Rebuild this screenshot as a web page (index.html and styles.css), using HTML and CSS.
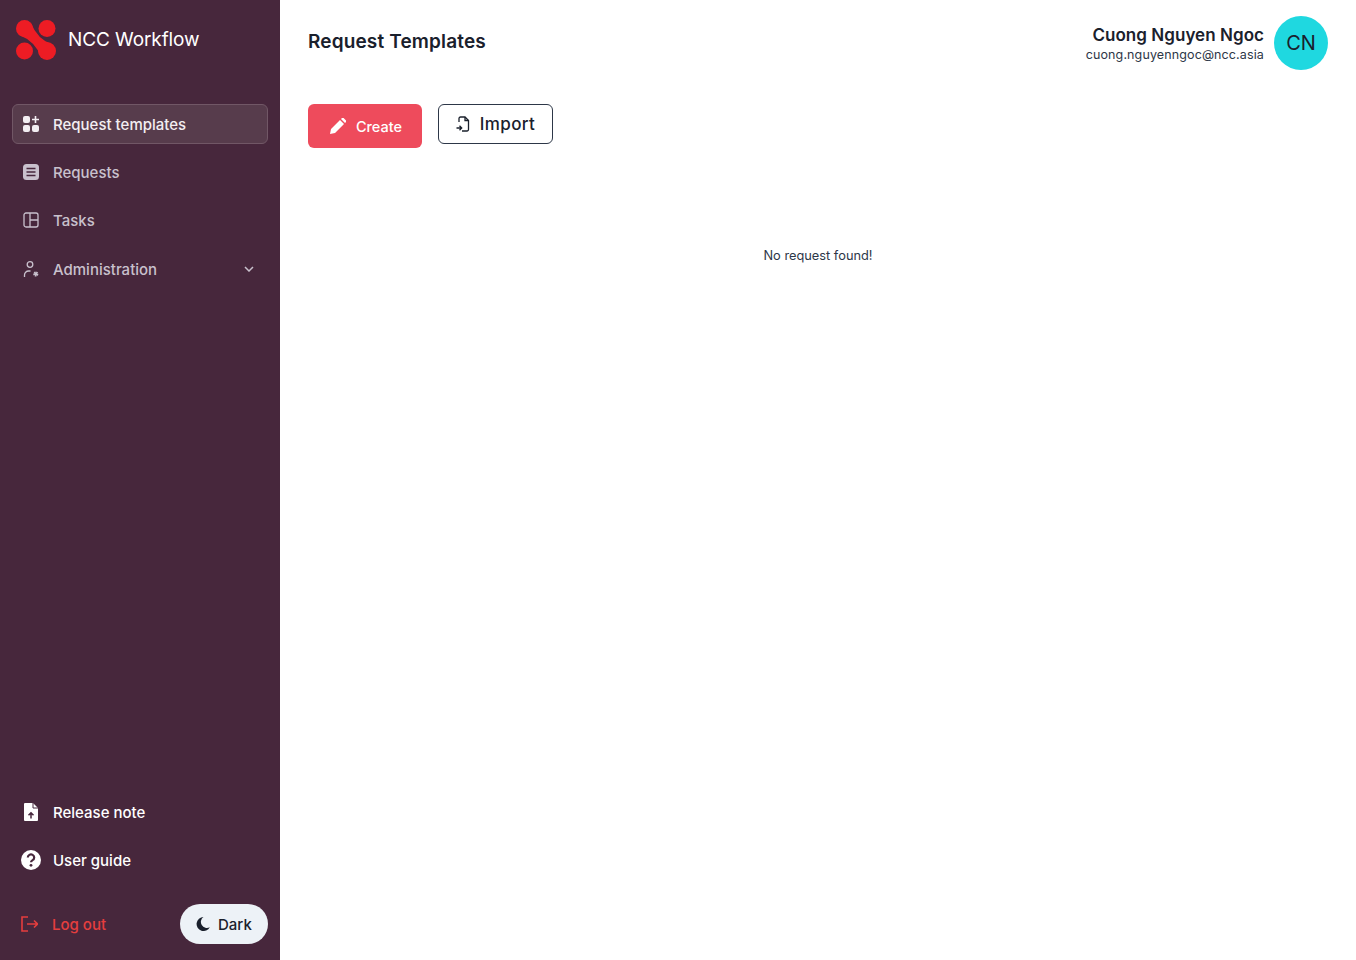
FILE: index.html
```html
<!DOCTYPE html>
<html lang="en">
<head>
    <meta charset="UTF-8">
    <meta name="viewport" content="width=device-width, initial-scale=1.0">
    <title>NCC Workflow</title>
    <link rel="stylesheet" href="styles.css">
</head>
<body>
    <div class="app">
        <aside class="sidebar">
            <div class="brand">
                <svg class="brand-logo" viewBox="0 0 40 40" fill="#ed1c24">
                    <circle cx="8.500" cy="8.500" r="8.500"/>
                    <circle cx="31" cy="31" r="9"/>
                    <circle cx="8.500" cy="31" r="8.500"/>
                    <circle cx="31" cy="8.500" r="8.500"/>
                    <path d="M15 3Q21 19 37 25L25 37Q19 21 3 15z"/>
                </svg>
                <span class="brand-name">NCC Workflow</span>
            </div>

            <nav class="nav">
                <a class="nav-item active">
                    <svg class="nav-icon" viewBox="0 0 16 16" fill="currentColor">
                        <rect x="0" y="0" width="7" height="7" rx="2"/>
                        <rect x="0" y="9" width="7" height="7" rx="2"/>
                        <rect x="9" y="9" width="7" height="7" rx="2"/>
                        <path d="M11.700 0h1.600v2.700H16v1.600h-2.700V7h-1.600V4.300H9V2.700h2.700z"/>
                    </svg>
                    <span>Request templates</span>
                </a>
                <a class="nav-item">
                    <svg class="nav-icon" viewBox="0 0 16 16">
                        <rect x="0" y="0" width="16" height="16" rx="3.500" fill="currentColor"/>
                        <path d="M3.500 4.500h9M3.500 8h9M3.500 11.500h9" stroke="#47273c" stroke-width="1.600"/>
                    </svg>
                    <span>Requests</span>
                </a>
                <a class="nav-item">
                    <svg class="nav-icon" viewBox="0 0 16 16" fill="none" stroke="currentColor" stroke-width="1.300">
                        <rect x="1" y="1" width="14" height="14" rx="2"/>
                        <path d="M7 1v14M7 8h8"/>
                    </svg>
                    <span>Tasks</span>
                </a>
                <a class="nav-item nav-item-tall">
                    <svg class="nav-icon" viewBox="0 0 16 16" fill="none" stroke="currentColor" stroke-width="1.300">
                        <circle cx="7" cy="3.500" r="2.800"/>
                        <path d="M1.500 16v-2a4 4 0 0 1 4-4h2"/>
                        <circle cx="12.800" cy="13" r="1.700" fill="currentColor" stroke-dasharray="1.300 .6" stroke-width="1.800"/>
                    </svg>
                    <span>Administration</span>
                    <svg class="nav-chevron" viewBox="0 0 10 6" fill="none" stroke="currentColor" stroke-width="1.500">
                        <path d="M1 1l4 4 4-4"/>
                    </svg>
                </a>
            </nav>

            <div class="nav nav-bottom">
                <a class="nav-item light">
                    <svg class="nav-icon nav-icon-file" viewBox="0 0 14 18">
                        <path d="M1 0H9l5 5v12a1 1 0 0 1-1 1H1a1 1 0 0 1-1-1V1a1 1 0 0 1 1-1z" fill="#fff"/>
                        <path d="M9 0v5h5" fill="none" stroke="#47273c" stroke-width="1"/>
                        <path d="M7 15.500V10M4.500 12.300 7 9.800l2.500 2.500" fill="none" stroke="#47273c" stroke-width="1.500"/>
                    </svg>
                    <span>Release note</span>
                </a>
                <a class="nav-item light">
                    <svg class="nav-icon nav-icon-big" viewBox="0 0 20 20">
                        <circle cx="10" cy="10" r="10" fill="#fff"/>
                        <path d="M6.800 7.500a3.200 3 0 1 1 4.800 2.600c-1 .6-1.600 1-1.600 2.200" fill="none" stroke="#47273c" stroke-width="2.200"/>
                        <circle cx="10" cy="15.300" r="1.400" fill="#47273c"/>
                    </svg>
                    <span>User guide</span>
                </a>
            </div>

            <div class="sidebar-foot">
                <a class="logout">
                    <svg class="logout-icon" viewBox="0 0 17 16" fill="none" stroke="currentColor" stroke-width="1.600">
                        <path d="M7 1H1v14h6M6 8h10.500M13 4.500 16.500 8 13 11.500"/>
                    </svg>
                    <span>Log out</span>
                </a>
                <button class="theme-toggle">
                    <svg class="theme-icon" viewBox="0 0 14 14" fill="currentColor">
                        <path d="M7.500 0a7 7 0 1 0 6.300 10.200A6 6 0 0 1 7.500 0z"/>
                    </svg>
                    <span>Dark</span>
                </button>
            </div>
        </aside>

        <main class="main">
            <header class="topbar">
                <h1 class="page-title">Request Templates</h1>
                <div class="user">
                    <div class="user-info">
                        <div class="user-name">Cuong Nguyen Ngoc</div>
                        <div class="user-mail">cuong.nguyenngoc@ncc.asia</div>
                    </div>
                    <div class="avatar">CN</div>
                </div>
            </header>

            <div class="actions">
                <button class="btn btn-create">
                    <svg class="btn-icon" viewBox="0 0 16 16" fill="currentColor">
                        <path d="M0 16l1-5L10 2l4 4-9 9zM11 1l1-1c.6-.4 1.200-.4 1.600 0l2.400 2.400c.4.400.4 1 0 1.600l-1 1z"/>
                    </svg>
                    <span>Create</span>
                </button>
                <button class="btn btn-import">
                    <svg class="btn-icon-small" viewBox="0 0 14 16" fill="none" stroke="currentColor" stroke-width="1.300">
                        <path d="M3 6V2.500A1.500 1.500 0 0 1 4.500 1H9l3.500 3.500v9A1.500 1.500 0 0 1 11 15H6"/>
                        <path d="M9 1v3.500h3.500M0.500 12h5M3.500 9.800 5.700 12l-2.200 2.200"/>
                    </svg>
                    <span>Import</span>
                </button>
            </div>

            <p class="empty">No request found!</p>
        </main>
    </div>
</body>
</html>
```

FILE: styles.css
```css
* {
    box-sizing: border-box;
}

body {
    margin: 0;
    font-family: Inter, "Noto Sans", sans-serif;
    color: #1a202c;
    background-color: white;
}

.app {
    display: flex;
    height: 960px;
}

.sidebar {
    display: flex;
    flex-direction: column;
    flex: none;
    width: 280px;
    padding: 20px 12px 16px;
    background-color: #47273c;
}

.brand {
    display: flex;
    align-items: center;
    gap: 12px;
    height: 40px;
    padding-left: 4px;
    margin-bottom: 44px;
}

.brand-logo {
    width: 40px;
    height: 40px;
}

.brand-name {
    padding-bottom: 2px;
    font-size: 19px;
    letter-spacing: -0.1px;
    color: white;
}

.nav {
    display: flex;
    flex-direction: column;
    gap: 8px;
}

.nav-bottom {
    margin-top: auto;
    margin-bottom: 24px;
}

.nav-item {
    display: flex;
    align-items: center;
    height: 40px;
    padding: 0 13px 0 10px;
    border: 1px solid transparent;
    border-radius: 6px;
    font-size: 15px;
    font-weight: 500;
    color: #c9c1cd;
}

.nav-item-tall {
    height: 42px;
}

.nav-item span {
    flex: 1;
}

.nav-item.active {
    background-color: #573c4c;
    border-color: #715766;
    color: #f3eef2;
}

.nav-item.light {
    color: white;
}

.nav-icon {
    flex: none;
    width: 16px;
    height: 16px;
    margin-right: 14px;
}

.nav-icon-file {
    width: 14px;
    height: 18px;
    margin: 0 15px 0 1px;
}

.nav-icon-big {
    width: 20px;
    height: 20px;
    margin: 0 12px 0 -2px;
}

.nav-chevron {
    width: 10px;
    height: 6px;
}

.sidebar-foot {
    display: flex;
    align-items: center;
    justify-content: space-between;
    height: 40px;
}

.logout {
    display: flex;
    align-items: center;
    gap: 14px;
    padding-left: 9px;
    font-size: 15px;
    font-weight: 500;
    color: #e53e3e;
}

.logout-icon {
    width: 17px;
    height: 16px;
}

.theme-toggle {
    display: flex;
    align-items: center;
    gap: 8px;
    width: 88px;
    height: 40px;
    padding: 0 16px;
    border: 0;
    border-radius: 20px;
    background-color: #edf2f7;
    font-family: inherit;
    font-size: 15px;
    font-weight: 500;
    color: #1a202c;
}

.theme-icon {
    width: 14px;
    height: 14px;
}

.main {
    flex: 1;
    padding: 16px 28px 0;
}

.topbar {
    display: flex;
    align-items: center;
    justify-content: space-between;
    height: 54px;
    margin-bottom: 34px;
}

.page-title {
    margin: 0 0 4px;
    font-size: 19px;
    font-weight: 600;
    letter-spacing: 0.15px;
}

.user {
    display: flex;
    align-items: center;
    gap: 10px;
}

.user-info {
    padding-top: 2px;
    text-align: right;
}

.user-name {
    font-size: 17px;
    font-weight: 600;
    line-height: 22px;
    letter-spacing: 0.05px;
}

.user-mail {
    font-size: 12.500px;
    line-height: 18px;
    letter-spacing: 0.12px;
    color: #2d3748;
}

.avatar {
    display: flex;
    align-items: center;
    justify-content: center;
    width: 54px;
    height: 54px;
    border-radius: 50%;
    background-color: #1fd8e0;
    font-size: 20px;
}

.actions {
    display: flex;
    align-items: flex-start;
    gap: 16px;
}

.btn {
    display: flex;
    align-items: center;
    justify-content: center;
    font-family: inherit;
}

.btn-create {
    gap: 10px;
    width: 114px;
    height: 44px;
    padding: 0 0 0 2px;
    border: 0;
    border-radius: 6px;
    background-color: #ee4b5c;
    font-size: 14.500px;
    font-weight: 500;
    color: white;
}

.btn-icon {
    width: 16px;
    height: 16px;
}

.btn-import {
    gap: 10px;
    width: 115px;
    height: 40px;
    background-color: white;
    border: 1px solid #2d3748;
    border-radius: 6px;
    font-size: 17px;
    font-weight: 500;
    letter-spacing: 0.4px;
    color: #1a202c;
}

.btn-icon-small {
    width: 14px;
    height: 16px;
}

.empty {
    margin: 0;
    padding-top: 100px;
    text-align: center;
    font-size: 12.800px;
    line-height: 16px;
    color: #2d3748;
}
```
